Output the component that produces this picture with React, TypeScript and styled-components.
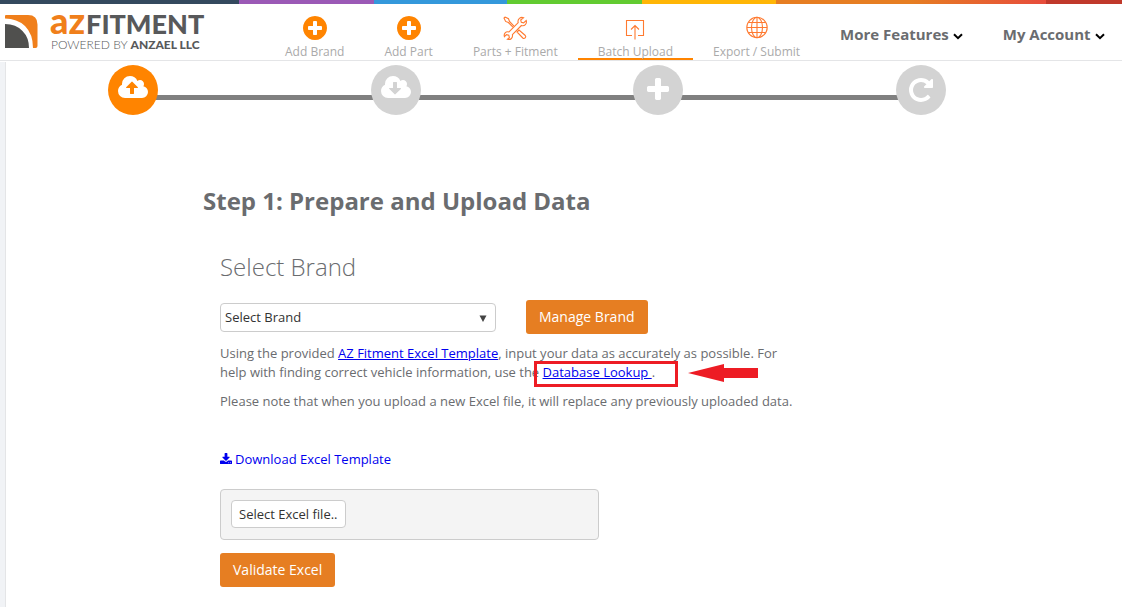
import React from "react";
import styled, { createGlobalStyle } from "styled-components";

const GlobalStyle = createGlobalStyle`
  * { box-sizing: border-box; }
  body {
    margin: 0;
    background: #fff;
    color: #6a6c6f;
    font-family: "Open Sans", "Liberation Sans", sans-serif;
    font-size: 13px;
    line-height: 19px;
  }
  a { color: #0000ee; }
  button, select { font-family: inherit; }
`;

const Stripe = styled.div`
  height: 4px;
  background: linear-gradient(
    to right,
    #34495e 21.3%, #9b59b6 21.3%, #9b59b6 33.3%, #3498db 33.3%, #3498db 45.2%,
    #62cb31 45.2%, #62cb31 57.2%, #ffb606 57.2%, #ffb606 69.2%,
    #e67e22 69.2%, #e67e22 81.1%, #e74c3c 93.2%, #c0392b 93.2%
  );
`;

const Header = styled.header`
  display: flex;
  height: 57px;
  border-bottom: 1px solid #e4e5e7;
`;

const Logo = styled.a`
  display: flex;
  align-items: flex-start;
  flex: 0 0 265px;
  padding: 8px 0 0 5px;
  text-decoration: none;
  font-family: Lato, "Open Sans", sans-serif;
  color: #58595b;
`;

const LogoText = styled.span`
  display: flex;
  flex-direction: column;
  margin-left: 12px;
`;

const LogoName = styled.span`
  display: flex;
  align-items: baseline;
  gap: 1px;
  height: 16px;
  line-height: 16px;
  font-size: 27px;
  font-weight: 900;
`;

const LogoAz = styled.span`
  font-size: 36px;
  color: #f07f1b;
`;

const LogoTagline = styled.span`
  margin: 10px 0 0 1px;
  font-size: 12px;
  line-height: 14px;
  font-weight: 300;
  white-space: nowrap;
  b { font-weight: 900; }
`;

const Nav = styled.nav`
  display: flex;
  flex: 1;
`;

const NavItem = styled.a<{ $active?: boolean }>`
  display: flex;
  flex-direction: column;
  align-items: center;
  padding: 10px 20px 0;
  border-bottom: 2px solid ${(p) => (p.$active ? "#ff8400" : "transparent")};
  color: #aaa;
  font-size: 12px;
  text-decoration: none;
  white-space: nowrap;
  svg { display: block; flex: none; }
`;

const NavLabel = styled.span`
  flex: none;
  margin-top: 2px;
  line-height: 16px;
`;

const NavMenu = styled.button`
  display: flex;
  align-items: center;
  gap: 4px;
  padding: 4px 20px 0;
  border: 0;
  background: none;
  color: #6a6c6f;
  font-size: 15px;
  font-weight: 700;
  white-space: nowrap;
  svg { margin-top: 5px; }
`;

const Page = styled.main`
  margin-top: 1px;
  min-height: calc(100vh - 62px);
  border-left: 5px solid #f1f3f6;
`;

const Content = styled.div`
  border-left: 1px solid #e4e5e7;
  min-height: calc(100vh - 62px);
  padding: 3px 0 20px;
`;

const Steps = styled.ol`
  display: flex;
  align-items: center;
  list-style: none;
  margin: 0 176px 0 102px;
  padding: 0;
`;

const Step = styled.li<{ $first?: boolean }>`
  display: flex;
  align-items: center;
  flex: ${(p) => (p.$first ? "none" : "1")};
`;

const StepLine = styled.span`
  flex: 1;
  height: 5px;
  margin: 14px -2px 0;
  background: #808080;
`;

const StepCircle = styled.span<{ $active?: boolean }>`
  display: flex;
  align-items: center;
  justify-content: center;
  position: relative;
  z-index: 1;
  width: 50px;
  height: 50px;
  border-radius: 50%;
  color: #fff;
  background: ${(p) => (p.$active ? "#ff8400" : "#d3d3d3")};
`;

const Title = styled.h1`
  margin: 69px 0 0 197px;
  font-size: 24px;
  line-height: 33px;
  font-weight: 700;
`;

const Form = styled.section`
  margin: 33px 0 0 214px;
  max-width: 580px;
`;

const Subtitle = styled.h2`
  margin: 0;
  font-size: 24px;
  line-height: 34px;
  font-weight: 300;
`;

const BrandRow = styled.div`
  display: flex;
  align-items: center;
  gap: 30px;
  margin-top: 16px;
`;

const SelectWrap = styled.label`
  display: grid;
  align-items: center;
  width: 276px;
  svg, select { grid-area: 1 / 1; }
  svg { justify-self: end; margin: 2px 9px 0 0; pointer-events: none; }
`;

const Select = styled.select`
  appearance: none;
  width: 100%;
  height: 29px;
  padding: 0 4px;
  border: 1px solid #ccc;
  border-radius: 4px;
  background: #fff;
  color: #333;
  font-size: 13px;
`;

const PrimaryButton = styled.button`
  height: 34px;
  padding: 0 13px 2px;
  border: 0;
  border-radius: 3px;
  background: #e67e22;
  color: #fff;
  font-size: 14px;
  white-space: nowrap;
`;

const Text = styled.p`
  margin: 10px 0 0;
`;

const Marked = styled.span`
  position: relative;
  white-space: nowrap;
`;

const MarkBox = styled.span`
  position: absolute;
  left: -9px;
  top: -2px;
  width: 144px;
  height: 26px;
  border: 3px solid #ed1c24;
  pointer-events: none;
`;

const MarkArrow = styled.svg`
  position: absolute;
  left: 145px;
  top: 0;
`;

const Download = styled.a`
  display: flex;
  align-items: center;
  gap: 3px;
  margin-top: 39px;
  width: max-content;
  text-decoration: none;
`;

const UploadPanel = styled.div`
  width: 379px;
  max-width: 100%;
  margin: 20px 0 13px;
  padding: 10px;
  border: 1px solid #ccc;
  border-radius: 4px;
  background: #f4f4f4;
`;

const FileButton = styled.button`
  display: block;
  height: 28px;
  margin-bottom: 1px;
  padding: 0 7px;
  border: 1px solid #ccc;
  border-radius: 4px;
  background: #fff;
  color: #333;
  font-size: 13px;
`;

const paths = {
  plusCircle:
    "M1344 960v-128q0-26-19-45t-45-19h-256v-256q0-26-19-45t-45-19h-128q-26 0-45 19t-19 45v256h-256q-26 0-45 19t-19 45v128q0 26 19 45t45 19h256v256q0 26 19 45t45 19h128q26 0 45-19t19-45v-256h256q26 0 45-19t19-45zm320-64q0 209-103 385.5t-279.5 279.5-385.5 103-385.5-103-279.5-279.5-103-385.5 103-385.5 279.5-279.5 385.5-103 385.5 103 279.5 279.5 103 385.5z",
  cloudUp:
    "M1280 736q0-14-9-23l-352-352q-9-9-23-9t-23 9l-351 351q-10 12-10 24 0 14 9 23t23 9h224v352q0 13 9.5 22.5t22.5 9.5h192q13 0 22.5-9.5t9.5-22.5v-352h224q13 0 22.5-9.5t9.5-22.5zm640 288q0 159-112.5 271.5t-271.5 112.5h-1088q-185 0-316.5-131.5t-131.5-316.5q0-130 70-240t188-165q-2-30-2-43 0-212 150-362t362-150q156 0 285.5 87t188.5 231q71-62 166-62 106 0 181 75t75 181q0 76-41 138 130 31 213.5 135.5t83.5 238.5z",
  cloudDown:
    "M1280 800q0-14-9-23t-23-9h-224v-352q0-13-9.5-22.5t-22.5-9.5h-192q-13 0-22.5 9.5t-9.5 22.5v352h-224q-13 0-22.5 9.5t-9.5 22.5q0 14 9 23l352 352q9 9 23 9t23-9l351-351q10-12 10-24zm640 224q0 159-112.5 271.5t-271.5 112.5h-1088q-185 0-316.5-131.5t-131.5-316.5q0-130 70-240t188-165q-2-30-2-43 0-212 150-362t362-150q156 0 285.5 87t188.5 231q71-62 166-62 106 0 181 75t75 181q0 76-41 138 130 31 213.5 135.5t83.5 238.5z",
  plus: "M1600 736v192q0 40-28 68t-68 28h-416v416q0 40-28 68t-68 28h-192q-40 0-68-28t-28-68v-416h-416q-40 0-68-28t-28-68v-192q0-40 28-68t68-28h416v-416q0-40 28-68t68-28h192q40 0 68 28t28 68v416h416q40 0 68 28t28 68z",
  repeat:
    "M1664 256v448q0 26-19 45t-45 19h-448q-42 0-59-40-17-39 14-69l138-138q-148-137-349-137-104 0-198.5 40.5t-163.5 109.5-109.5 163.5-40.5 198.5 40.5 198.5 109.5 163.5 163.5 109.5 198.5 40.5q119 0 225-52t179-147q7-10 23-12 15 0 25 9l137 138q9 8 9.5 20.5t-7.5 22.5q-109 132-264 204.5t-327 72.5q-156 0-298-61t-245-164-164-245-61-298 61-298 164-245 245-164 298-61q147 0 284.5 55.5t244.5 156.5l130-129q29-31 70-14 39 17 39 59z",
  download:
    "M1344 1344q0-26-19-45t-45-19-45 19-19 45 19 45 45 19 45-19 19-45zm256 0q0-26-19-45t-45-19-45 19-19 45 19 45 45 19 45-19 19-45zm128-224v320q0 40-28 68t-68 28h-1472q-40 0-68-28t-28-68v-320q0-40 28-68t68-28h465l135 136q58 56 136 56t136-56l136-136h464q40 0 68 28t28 68zm-325-569q17 41-14 70l-448 448q-18 19-45 19t-45-19l-448-448q-31-29-14-70 17-39 59-39h256v-448q0-26 19-45t45-19h256q26 0 45 19t19 45v448h256q42 0 59 39z",
};

type GlyphProps = { d: string; size: number; width?: number; left?: number; color?: string };

const Glyph = ({ d, size, width = 1792, left = 0, color = "currentColor" }: GlyphProps) => (
  <svg
    width={Math.round((size * width) / 1792)}
    height={size}
    viewBox={`${left} 0 ${width} 1792`}
    fill={color}
    aria-hidden="true"
  >
    <path d={d} />
  </svg>
);

const LineIcon = ({ children }: { children: React.ReactNode }) => (
  <svg width="28" height="28" viewBox="0 0 28 28" fill="none" stroke="#ff7a30" strokeWidth="1.1" aria-hidden="true">
    {children}
  </svg>
);

const ToolsIcon = () => (
  <LineIcon>
    <path d="M4 3l3.500 1.700 1 2.800 4.500 4.600M4 3l-1 1 1.600 3.400 2.800 1.100 4.500 4.600" />
    <path d="M16 18l2-2 6.300 5.500c1.400 1.600-.9 4-2.500 2.500z" />
    <path d="M22.6 3.700c-3-1.200-6.400 1.300-5.400 5L8 18c-3.200-1-5.500 1.500-4.600 4.700l2-2 2.400.6.6 2.400-2 1.600c3.400 1 5.600-1.600 5-4.600l9-9.200c3.200 1 5.800-1.700 4.800-5l-2.600 2.400-2.300-.6-.6-2.300z" />
  </LineIcon>
);

const UploadIcon = () => (
  <LineIcon>
    <path d="M11 21.500H5.500v-15h17v15H17M14 25.500V11.500M10 15.500l4-4 4 4" />
  </LineIcon>
);

const GlobeIcon = () => (
  <LineIcon>
    <circle cx="14" cy="13.500" r="10.200" />
    <ellipse cx="14" cy="13.500" rx="5.500" ry="10.200" />
    <path d="M14 3.500v20M4 13.500h20M5.500 8.500h17M5.500 18.500h17" />
  </LineIcon>
);

const Chevron = () => (
  <svg width="10" height="7" viewBox="0 0 10 7" fill="none" stroke="#000" strokeWidth="2" aria-hidden="true">
    <path d="M1 1.200l4 4 4-4" />
  </svg>
);

const LogoMark = () => (
  <svg width="33" height="37" viewBox="0 0 33 37" aria-hidden="true">
    <path d="M1 3h22q9.500 0 9.500 9.500V34q0 2-2 2H28Q28 22 20 14 12 6.500 0 6.500V4q0-1 1-1z" fill="#f07f1b" />
    <path d="M0 12q11 0 17.500 7Q24 25.500 24 36H0z" fill="#50504e" />
  </svg>
);

export default function App() {
  return (
    <>
      <GlobalStyle />
      <Stripe />
      <Header>
        <Logo href="#">
          <LogoMark />
          <LogoText>
            <LogoName><LogoAz>az</LogoAz>FITMENT</LogoName>
            <LogoTagline>POWERED BY <b>ANZAEL LLC</b></LogoTagline>
          </LogoText>
        </Logo>
        <Nav>
          <NavItem href="#">
            <Glyph d={paths.plusCircle} size={28} color="#ff8400" />
            <NavLabel>Add Brand</NavLabel>
          </NavItem>
          <NavItem href="#">
            <Glyph d={paths.plusCircle} size={28} color="#ff8400" />
            <NavLabel>Add Part</NavLabel>
          </NavItem>
          <NavItem href="#">
            <ToolsIcon />
            <NavLabel>Parts + Fitment</NavLabel>
          </NavItem>
          <NavItem href="#" $active>
            <UploadIcon />
            <NavLabel>Batch Upload</NavLabel>
          </NavItem>
          <NavItem href="#">
            <GlobeIcon />
            <NavLabel>Export / Submit</NavLabel>
          </NavItem>
          <NavMenu type="button">More Features <Chevron /></NavMenu>
          <NavMenu type="button">My Account <Chevron /></NavMenu>
        </Nav>
      </Header>
      <Page>
        <Content>
          <Steps>
            <Step $first><StepCircle $active><Glyph d={paths.cloudUp} size={28} width={1920} /></StepCircle></Step>
            <Step><StepLine /><StepCircle><Glyph d={paths.cloudDown} size={28} width={1920} /></StepCircle></Step>
            <Step><StepLine /><StepCircle><Glyph d={paths.plus} size={28} /></StepCircle></Step>
            <Step><StepLine /><StepCircle><Glyph d={paths.repeat} size={28} /></StepCircle></Step>
          </Steps>
          <Title>Step 1: Prepare and Upload Data</Title>
          <Form>
            <Subtitle>Select Brand</Subtitle>
            <BrandRow>
              <SelectWrap>
                <Select aria-label="Brand"><option>Select Brand</option></Select>
                <svg width="8" height="7" viewBox="0 0 8 7" aria-hidden="true"><path d="M.5.500h7L4 7z" fill="#444" /></svg>
              </SelectWrap>
              <PrimaryButton type="button">Manage Brand</PrimaryButton>
            </BrandRow>
            <Text>
              Using the provided <a href="#">AZ Fitment Excel Template</a>, input your data as accurately as possible. For
              help with finding correct vehicle information, use the{" "}
              <Marked>
                <a href="#">Database Lookup </a>.
                <MarkBox />
                <MarkArrow width="70" height="20" viewBox="0 0 70 20" aria-hidden="true">
                  <path d="M0 10L36 1v4h34v10H36v4z" fill="#ed1c24" />
                </MarkArrow>
              </Marked>
            </Text>
            <Text>Please note that when you upload a new Excel file, it will replace any previously uploaded data.</Text>
            <Download href="#">
              <Glyph d={paths.download} size={13} width={1664} left={64} />
              Download Excel Template
            </Download>
            <UploadPanel>
              <FileButton type="button">Select Excel file..</FileButton>
            </UploadPanel>
            <PrimaryButton type="button">Validate Excel</PrimaryButton>
          </Form>
        </Content>
      </Page>
    </>
  );
}
